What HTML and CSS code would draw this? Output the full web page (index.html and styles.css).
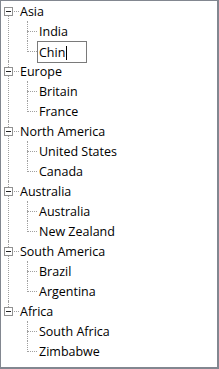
FILE: index.html
```html
<!DOCTYPE html>
<html lang="en">
<head>
    <meta charset="UTF-8">
    <title>TreeView</title>
    <link rel="stylesheet" href="styles.css">
</head>
<body>
    <div class="treeview">
        <ul class="tree">
            <li>
                <div class="row"><span class="toggle"></span><span class="label">Asia</span></div>
                <ul class="kids">
                    <li><div class="row"><span class="label">India</span></div></li>
                    <li><div class="row edit-row"><span class="rename">Chin<span class="caret"></span></span></div></li>
                </ul>
            </li>
            <li>
                <div class="row"><span class="toggle"></span><span class="label">Europe</span></div>
                <ul class="kids">
                    <li><div class="row"><span class="label">Britain</span></div></li>
                    <li><div class="row"><span class="label">France</span></div></li>
                </ul>
            </li>
            <li>
                <div class="row"><span class="toggle"></span><span class="label">North America</span></div>
                <ul class="kids">
                    <li><div class="row"><span class="label">United States</span></div></li>
                    <li><div class="row"><span class="label">Canada</span></div></li>
                </ul>
            </li>
            <li>
                <div class="row"><span class="toggle"></span><span class="label">Australia</span></div>
                <ul class="kids">
                    <li><div class="row"><span class="label">Australia</span></div></li>
                    <li><div class="row"><span class="label">New Zealand</span></div></li>
                </ul>
            </li>
            <li>
                <div class="row"><span class="toggle"></span><span class="label">South America</span></div>
                <ul class="kids">
                    <li><div class="row"><span class="label">Brazil</span></div></li>
                    <li><div class="row"><span class="label">Argentina</span></div></li>
                </ul>
            </li>
            <li>
                <div class="row"><span class="toggle"></span><span class="label">Africa</span></div>
                <ul class="kids">
                    <li><div class="row"><span class="label">South Africa</span></div></li>
                    <li><div class="row"><span class="label">Zimbabwe</span></div></li>
                </ul>
            </li>
        </ul>
    </div>
</body>
</html>
```

FILE: styles.css
```css
/* page */
body {
    margin: 0;
    font-family: "Open Sans", "Noto Sans", sans-serif;
    font-size: 12.5px;
    color: #000;
    background: #fff;
}
/* tree view frame */
.treeview {
    width: 219px;
    height: 369px;
    box-sizing: border-box;
    border: 1px solid #828790;
    border-right-width: 2px;
    border-bottom-width: 2px;
    background: #fff;
    overflow: hidden;
}
ul {
    list-style: none;
    margin: 0;
    padding: 0;
}
li {
    position: relative;
}
.row {
    position: relative;
    height: 20px;
    display: flex;
    align-items: center;
    white-space: nowrap;
}
.label {
    padding-top: 1px;
}
.tree > li > .row {
    padding-left: 19px;
}
.kids > li > .row {
    padding-left: 38px;
}
/* dotted tree lines */
.tree > li::before,
.kids > li::before {
    content: "";
    position: absolute;
    top: 0;
    bottom: 0;
    border-left: 1px dotted #a0a0a0;
}
.tree > li::before {
    left: 7px;
}
.tree > li:first-child::before {
    top: 10px;
}
.tree > li:last-child::before {
    bottom: auto;
    height: 10px;
}
.kids > li::before {
    left: 26px;
}
.kids > li:last-child::before {
    bottom: auto;
    height: 11px;
}
.row::before {
    content: "";
    position: absolute;
    top: 10px;
    border-top: 1px dotted #a0a0a0;
}
.tree > li > .row::before {
    left: 7px;
    width: 11px;
}
.kids > li > .row::before {
    left: 26px;
    width: 10px;
}
/* expand / collapse box */
.toggle {
    position: absolute;
    left: 3px;
    top: 6px;
    width: 7px;
    height: 7px;
    border: 1px solid #919191;
    background: #fff;
    z-index: 1;
}
.toggle::after {
    content: "";
    position: absolute;
    left: 1px;
    top: 3px;
    width: 5px;
    height: 1px;
    background: #222;
}
/* label being renamed */
.kids > li > .edit-row {
    padding-left: 36px;
    align-items: flex-start;
}
.rename {
    position: relative;
    z-index: 1;
    box-sizing: border-box;
    width: 50px;
    height: 22px;
    padding-left: 1px;
    padding-top: 1px;
    border: 1px solid #7a7a7a;
    background: #fff;
    display: flex;
    align-items: center;
}
.caret {
    display: inline-block;
    width: 1px;
    height: 14px;
    margin-left: 1px;
    background: #000;
}
```
